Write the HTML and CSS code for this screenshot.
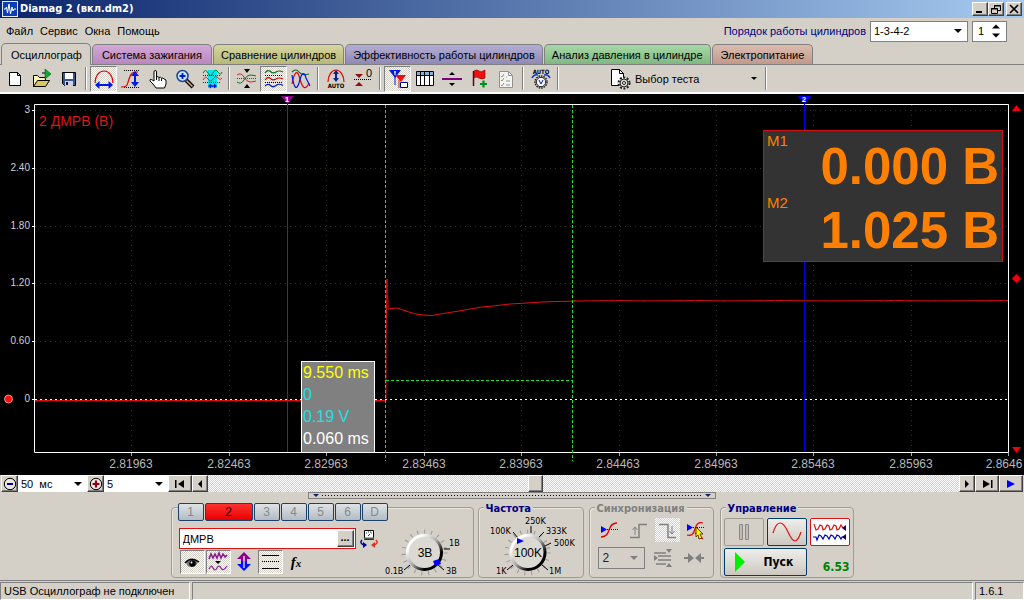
FILE: index.html
```
<!DOCTYPE html>
<html lang="ru">
<head>
<meta charset="utf-8">
<meta name="viewport" content="width=device-width, initial-scale=1">
<title>Diamag 2</title>
<link rel="stylesheet" href="styles.css">
</head>
<body>
<div class="app">
  <header class="titlebar">
    <svg class="logo" width="16" height="16" viewBox="0 0 16 16"><rect x=".5" y=".5" width="15" height="15" fill="#0c3fb4" stroke="#dfe9ff"/><path d="M2 8h1.500l1-2 1 6 1.500-9 1.500 10 1.500-7 1 4 1-2h2" fill="none" stroke="#fff"/></svg>
    <h1 class="title">Diamag 2 (вкл.dm2)</h1>
    <div class="winbuttons">
      <button class="winbtn" aria-label="Свернуть"><svg width="12" height="10"><path d="M2 8h6" stroke="#000" stroke-width="2"/></svg></button>
      <button class="winbtn" aria-label="Восстановить"><svg width="12" height="10" fill="none" stroke="#000"><path d="M4.500 4V1.500h6v5H8M4 2h7M1.500 4.500h6v5h-6zM1 5h7"/></svg></button>
      <button class="winbtn winbtn-close" aria-label="Закрыть"><svg width="12" height="10"><path d="M2 1l8 8M10 1L2 9" stroke="#000" stroke-width="1.600"/></svg></button>
    </div>
  </header>

  <div class="menurow">
    <nav class="menu">
      <button>Файл</button><button>Сервис</button><button>Окна</button><button>Помощь</button>
    </nav>
    <div class="order">
      <label for="order">Порядок работы цилиндров</label>
      <span class="combo combo-order"><select id="order"><option>1-3-4-2</option></select></span>
      <span class="spin"><input type="text" value="1" aria-label="Цилиндр"><svg width="10" height="14" viewBox="0 0 10 14"><path d="M1 4.500L5 .5l4 4zM1 9.500l4 4 4-4z"/></svg></span>
    </div>
  </div>

  <nav class="tabs">
    <button class="tab tab-active">Осциллограф</button>
    <button class="tab tab-ignition">Система зажигания</button>
    <button class="tab tab-compare">Сравнение цилиндров</button>
    <button class="tab tab-power">Эффективность работы цилиндров</button>
    <button class="tab tab-pressure">Анализ давления в цилиндре</button>
    <button class="tab tab-supply">Электропитание</button>
  </nav>

  <div class="toolbar">
    <button class="tool" aria-label="Новый"><svg viewBox="0 0 22 22"><path d="M5.500 4.500h8l3 3v10h-11z" fill="#fff" stroke="#000"/><path d="M13.500 4.500v3h3" fill="none" stroke="#000"/></svg></button>
    <button class="tool" aria-label="Открыть"><svg viewBox="0 0 22 22"><path d="M2.500 18.500v-11h4l2 2h6v3" fill="#fff8b0" stroke="#000"/><path d="M2.500 18.500l4-6h12l-4 6z" fill="#d8c860" stroke="#000"/><path d="M11 5h3" stroke="#000"/><path d="M14 1l6 5-6 5z" fill="#00b030" stroke="#005010" stroke-width=".6"/></svg></button>
    <button class="tool" aria-label="Сохранить"><svg viewBox="0 0 22 22"><path d="M4.500 4.500h13v13h-11l-2-2z" fill="#40508c" stroke="#000"/><path d="M7 5h8v6H7z" fill="#fff"/><path d="M7 13h8v5H7z" fill="#d0d0d8"/><path d="M8 14h2v3H8z" fill="#101030"/></svg></button>
    <span class="sep"></span>
    <button class="tool tool-on" aria-label="По горизонтали"><svg viewBox="0 0 22 22"><path d="M2 15C2 8 6 3 11 3s9 5 9 12" fill="none" stroke="#e00000" stroke-width="1.200"/><path d="M2 17l4.500-4v3h9v-3l4.500 4-4.500 4v-3h-9v3z" fill="#0018e8"/></svg></button>
    <button class="tool" aria-label="По вертикали"><svg viewBox="0 0 22 22"><path d="M1 19c7 0 6-2 8-8s3-7 9-7" fill="none" stroke="#e00000" stroke-width="1.200"/><path d="M4 2.500h16M4 19.500h16" stroke="#000" stroke-dasharray="1 1"/><path d="M15 3l4 5h-3v6h3l-4 5-4-5h3V8h-3z" fill="#0018e8"/></svg></button>
    <button class="tool" aria-label="Рука"><svg viewBox="0 0 22 22"><path d="M7 13V4q0-1.500 1.300-1.500T9.500 4v5q1.500-1 2.500.500 1.600-.8 2.500.700 1.800-.7 2.500.800 2 0 2 2v3l-1.500 4H9l-3-4-3-3q-.5-2 1.500-1.500z" fill="#fff" stroke="#000"/><path d="M9.500 9v3M12 10v3M14.500 10.500V13" stroke="#000"/></svg></button>
    <button class="tool" aria-label="Масштаб"><svg viewBox="0 0 22 22"><path d="M12 12l7 7" stroke="#000" stroke-width="4"/><path d="M12.500 12.500l6 6" stroke="#d8b060" stroke-width="1.500"/><circle cx="8.500" cy="8" r="5.500" fill="#c4e8ff" stroke="#20408c" stroke-width="1.500"/><path d="M5.500 8h6M8.500 5v6" stroke="#0018c8" stroke-width="1.800"/></svg></button>
    <button class="tool" aria-label="Участок"><svg viewBox="0 0 22 22"><path d="M7 2h9v18H7z" fill="#00e8f0"/><path d="M2 5q2.500-5 5 0t5 0 5-1 4 0" fill="none" stroke="#007828"/><path d="M2 12q2.500-5 5-1t5 0 5-1 4 0" fill="none" stroke="#e02020"/><path d="M2 7.500h18M2 14.500h18" stroke="#223" stroke-dasharray="1 1"/><path d="M8 18h7" stroke="#0018c8" stroke-width="1.500"/><path d="M7 18l3-2.500v5zM16 18l-3-2.500v5z" fill="#0018c8"/></svg></button>
    <span class="sep"></span>
    <button class="tool" aria-label="Сжать"><svg viewBox="0 0 22 22"><path d="M8 1h6l-3 4zM8 20h6l-3-4z"/><path d="M1 7q4-3 7 2t6 5 6-1" fill="none" stroke="#e02020"/><path d="M1 14q4 3 7-2t6-5 6 1" fill="none" stroke="#007828"/><path d="M1 10.500h20" stroke="#444" stroke-dasharray="1 1"/></svg></button>
    <button class="tool tool-on" aria-label="Раздельно"><svg viewBox="0 0 22 22" fill="none"><path d="M2 5q3-4 5.500-1.500T13 4t7 0" stroke="#007828" stroke-width="1.200"/><path d="M2 12q3-4 5.500-1.500T13 11t7 0" stroke="#e00000" stroke-width="1.200"/><path d="M2 18q3-3 5.500-.5t5.500 0 7 0" stroke="#0018c8" stroke-width="1.200"/><path d="M2 7.500h18M2 14.500h18" stroke="#000" stroke-dasharray="1 1"/></svg></button>
    <button class="tool" aria-label="Наложить"><svg viewBox="0 0 22 22" fill="none"><path d="M2 4q4-4 7 0t10 2" stroke="#007828" stroke-width="1.200"/><path d="M2 16Q6-4 10 11t9 4" stroke="#e00000" stroke-width="1.200"/><path d="M2 7q3 20 7 8 4-16 7-5l4 8" stroke="#0018e8" stroke-width="1.200"/></svg></button>
    <span class="sep"></span>
    <button class="tool" aria-label="Авто"><svg viewBox="0 0 22 22"><path d="M3 14C3 7 7 2 11 2s8 5 8 12" fill="none" stroke="#e00000" stroke-width="1.200"/><path d="M11 2l3 4h-2v4h2l-3 4-3-4h2V6H8z" fill="#102080"/><text x="11" y="20" class="icon-text">AUTO</text></svg></button>
    <button class="tool" aria-label="Ноль"><svg viewBox="0 0 22 22"><path d="M3 6h8l-4 4zM3 18h8l-4-4z" fill="#901010"/><path d="M2 11.500h18" stroke="#000" stroke-dasharray="1 1"/><text x="17" y="9" class="icon-zero">0</text></svg></button>
    <span class="sep"></span>
    <button class="tool tool-on" aria-label="Маркеры"><svg viewBox="0 0 22 22"><path d="M2 2h12L8 10z" fill="#0018e8"/><path d="M8 8v9" stroke="#0018e8"/><path d="M8 7h11l-5 7z" fill="#e81010"/><path d="M12 12v8" stroke="#e81010"/><path d="M7 4h2M8 3v4" stroke="#fff"/><path d="M13.500 14.500h7v5h-7z" fill="#fff" stroke="#000080"/></svg></button>
    <button class="tool" aria-label="Таблица"><svg viewBox="0 0 22 22"><path d="M2.500 3.500h17v14h-17z" fill="#fff" stroke="#000"/><path d="M3 4h16v3H3z" fill="#88b0d8"/><path d="M2 7.500h18M6.500 4v13M10.500 4v13M15.500 4v13" stroke="#000"/></svg></button>
    <button class="tool" aria-label="Линия"><svg viewBox="0 0 22 22"><path d="M1 11h20" stroke="#800080" stroke-width="2"/><path d="M8 7l3-3 3 3zM8 15h6l-3 3z"/></svg></button>
    <button class="tool" aria-label="Флажок"><svg viewBox="0 0 22 22"><path d="M5.500 3v15" stroke="#5c0010" stroke-width="1.500"/><path d="M6 3q3-2 5 0t6-1v8q-3 2-6 0t-5 0z" fill="#f01010" stroke="#700000" stroke-width=".6"/><path d="M12 16h7M15.500 12.500v7" stroke="#009020" stroke-width="2.200"/></svg></button>
    <button class="tool" aria-label="Список"><svg viewBox="0 0 22 22"><path d="M4.500 3.500h9l4 4v12h-13z" fill="#f4f4f0" stroke="#909090"/><path d="M13.500 3.500v4h4" fill="none" stroke="#909090"/><path d="M6 8l1 1 2-3M6 12l1 1 2-3M6 17l1 1 2-3M11 9h1M11 13h4M11 17h4" fill="none" stroke="#909090"/></svg></button>
    <span class="sep"></span>
    <button class="tool" aria-label="Автоизмерение"><svg viewBox="0 0 22 22"><text x="11" y="6" class="icon-text">AUTO</text><path d="M2 10q2-4 6-3M20 10q-2-4-6-3" fill="none" stroke="#1838d0" stroke-width="1.500"/><circle cx="11" cy="14" r="6" fill="none" stroke="#222" stroke-width="1.500" stroke-dasharray="1.500 1"/><circle cx="11" cy="14" r="4.700" fill="#f0f4ff" stroke="#222"/><path d="M9 12l2 4 2-4" fill="none" stroke="#1020a0"/></svg></button>
    <span class="sep sep-wide"></span>
    <button class="testpick">
      <svg width="22" height="22" viewBox="0 0 22 22"><path d="M2.500 1.500h8l4 4v12h-12z" fill="#fff" stroke="#000"/><path d="M10.500 1.500v4h4" fill="none" stroke="#000"/><circle cx="15" cy="15" r="5.500" fill="#e8e8e0" stroke="#222" stroke-width="2" stroke-dasharray="2 1.500"/><circle cx="15" cy="15" r="4" fill="#d8d8d0" stroke="#222"/><circle cx="15" cy="15" r="1.500" fill="#fff" stroke="#222"/></svg>
      <span>Выбор теста</span><i class="caret"></i>
    </button>
    <span class="sep"></span>
  </div>

  <main class="scope">
    <svg class="plot" viewBox="0 94 1024 381">
      <g class="grid">
        <path d="M35 110.500H1008M35 168.500H1008M35 226.500H1008M35 283.500H1008M35 341.500H1008"/>
        <path d="M131.500 105V452M229.500 105V452M326.500 105V452M424.500 105V452M521.500 105V452M619.500 105V452M716.500 105V452M813.500 105V452M911.500 105V452"/>
      </g>
      <path class="frame" d="M34.500 104.500H1008.500V452.500H34.500z"/>
      <path class="ticks" d="M32 110.500h3M32 168.500h3M32 226.500h3M32 283.500h3M32 341.500h3M32 399.500h3"/>
      <path class="xticks" d="M131.500 453v3M229.500 453v3M326.500 453v3M424.500 453v3M521.500 453v3M619.500 453v3M716.500 453v3M813.500 453v3M911.500 453v3M1008.500 453v3"/>
      <g class="ylabels"><text x="30" y="113">3</text><text x="30" y="171">2.40</text><text x="30" y="229">1.80</text><text x="30" y="286">1.20</text><text x="30" y="344">0.60</text><text x="30" y="402">0</text></g>
      <g class="xlabels"><text x="131" y="468">2.81963</text><text x="229" y="468">2.82463</text><text x="326" y="468">2.82963</text><text x="424" y="468">2.83463</text><text x="521" y="468">2.83963</text><text x="618" y="468">2.84463</text><text x="716" y="468">2.84963</text><text x="813" y="468">2.85463</text><text x="911" y="468">2.85963</text><text x="1004" y="468">2.8646</text></g>
      <text class="channel-name" x="39" y="126">2 ДМРВ (В)</text>
      <path class="marker1" d="M287.500 104V452"/>
      <path d="M281 96h13l-6.500 8z" fill="#900090"/><text class="flag" x="287" y="102">1</text>
      <path class="marker2" d="M804.500 104V452"/>
      <path d="M798 96h13l-6.500 8z" fill="#0000ff"/><text class="flag" x="804" y="102">2</text>
      <path class="trace" d="M35 400.500H386V345L387 279V294L388 300V309L397 308L403 310L409 312L416 314L423 315L432 315.500L440 314L453 312L462 310.500L470 309L482 307L493 306L510 304L527 303L542 302L557 301.500L580 301L620 300.500L640 301L700 300.500L720 301L780 300.500L830 301L900 300.500L930 301L1008 300.500"/>
      <path class="noise" d="M573 300.500H1008M35 401.500H386"/>
      <path class="zero" d="M35 399.500H1008"/>
      <path class="cursor" d="M385.500 105V461M572.500 105V461M386 380.500H572"/>
      <circle cx="8.500" cy="399" r="4" fill="#ff1010" stroke="#ffb0a0" stroke-width=".8"/>
      <path d="M1012 111l4.500-6 4.500 6zM1012 447h9l-4.500 6zM1012 278.500l4.500-4.500 4.500 4.500-4.500 4.500z" fill="#f00010"/>
    </svg>
    <div class="cursorbox"><span class="c-time">9.550 ms</span><span class="c-val">0</span><span class="c-val">0.19 V</span><span>0.060 ms</span></div>
    <div class="meter">
      <div class="meter-row"><span class="meter-name">M1</span><strong>0.000 В</strong></div>
      <div class="meter-row"><span class="meter-name">M2</span><strong>1.025 В</strong></div>
    </div>
  </main>

  <div class="scrollrow">
    <button class="raised round" aria-label="Меньше"><svg width="14" height="14" viewBox="0 0 14 14"><circle cx="7" cy="7" r="5.700" fill="#ece9e2" stroke="#000"/><path d="M4 7h6" stroke="#0000a0" stroke-width="2"/></svg></button>
    <span class="combo combo-time"><select aria-label="Развёртка"><option>50&nbsp; мс</option></select></span>
    <button class="raised round" aria-label="Больше"><svg width="14" height="14" viewBox="0 0 14 14"><circle cx="7" cy="7" r="5.700" fill="#ece9e2" stroke="#000"/><path d="M3.500 7h7M7 3.500v7" stroke="#900010" stroke-width="2.200"/></svg></button>
    <span class="combo combo-zoom"><select aria-label="Масштаб"><option>5</option></select></span>
    <button class="raised wide" aria-label="В начало"><svg width="12" height="8" viewBox="0 0 12 8"><path d="M1 0h1.500v8H1zM10 0v8L4 4z"/></svg></button>
    <button class="raised" aria-label="Влево"><svg width="6" height="8" viewBox="0 0 6 8"><path d="M5 0v8L1 4z"/></svg></button>
    <div class="track"><span class="thumb"></span></div>
    <button class="raised" aria-label="Вправо"><svg width="6" height="8" viewBox="0 0 6 8"><path d="M1 0v8l4-4z"/></svg></button>
    <button class="raised wide" aria-label="В конец"><svg width="12" height="8" viewBox="0 0 12 8"><path d="M10 0h1.500v8H10zM2 0v8l7-4z"/></svg></button>
    <button class="raised wide" aria-label="Воспроизвести"><svg width="12" height="8" viewBox="0 0 12 8"><path d="M2 0v8l8-4z" fill="#0000ff"/></svg></button>
  </div>

  <div class="splitter"><span class="grip"></span></div>

  <section class="panels">
    <div class="group channel">
      <div class="channel-left">
        <div class="chbuttons">
          <button class="ch">1</button><button class="ch ch-on">2</button><button class="ch">3</button><button class="ch">4</button><button class="ch">5</button><button class="ch">6</button><button class="ch">D</button>
        </div>
        <div class="probe">
          <span class="probe-field"><input type="text" value="ДМРВ" aria-label="Датчик"><button class="raised dots" aria-label="Выбрать">...</button></span>
          <button class="plain" aria-label="Подключить"><svg width="20" height="20" viewBox="0 0 20 20"><path d="M5.500 1.500h9v9h-9z" fill="#fff" stroke="#000"/><path d="M5 8.500h10v2H5z" fill="#506050"/><path d="M7 4h1M9 3h1M11 3h1M13 4h-1M11 5l-2 2" stroke="#333"/><path d="M3 11q-3 3 2 5" fill="none" stroke="#000090" stroke-width="1.500"/><path d="M4 13l4 3-4 3z" fill="#000090"/><path d="M17 11q3 3-2 5" fill="none" stroke="#e03020" stroke-width="1.500"/><path d="M16 13l-4 3 4 3z" fill="#e03020"/></svg></button>
        </div>
        <div class="chtools">
          <button class="sq sq-on" aria-label="Видимость"><svg viewBox="0 0 22 22"><path d="M5 11q6-5 12 0-2 5-7 5-4 0-5-5z" fill="#777"/><path d="M4 12q6-7 14-1" fill="none" stroke="#000" stroke-width="1.500"/><circle cx="11.500" cy="12.500" r="3.200"/><circle cx="10.500" cy="11.500" r="1" fill="#fff"/></svg></button>
          <button class="sq sq-on" aria-label="Фильтр"><svg viewBox="0 0 22 22" fill="none" stroke="#901890"><path d="M2 8l2-5 2 4 2-4 2 4 2-5 2 5 2-4 2 3 2-2" stroke-width="1.600"/><path d="M2 18q2-5 4-1t4 0 4 0 6-2" stroke-width="1.200"/><path d="M8 10h6l-3 3z" fill="#000" stroke="none"/></svg></button>
          <button class="sq" aria-label="Инверсия"><svg viewBox="0 0 22 22"><path d="M11 1l7 7h-4v3H8V8H4z" fill="#900090"/><path d="M11 20l7-7h-4v-3H8v3H4z" fill="#0010ff"/><path d="M11 5v12" stroke="#fff" stroke-width="1.200"/></svg></button>
          <button class="sq sq-on" aria-label="Связь"><svg viewBox="0 0 22 22"><path d="M3 4.500h17M3 17.500h17" stroke="#000"/><path d="M3 10.500h17" stroke="#000" stroke-dasharray="1 1"/></svg></button>
          <button class="sq fx" aria-label="Функция"><i>f<small>x</small></i></button>
        </div>
      </div>
      <svg class="knob" width="90" height="74" viewBox="382 504 90 74">
        <defs><linearGradient id="k" x1="0" y1="0" x2="1" y2="1"><stop offset=".2" stop-color="#fff"/><stop offset=".5" stop-color="#aaa"/><stop offset=".75" stop-color="#000"/></linearGradient></defs>
        <circle cx="424.500" cy="552.500" r="21" class="dial"/>
        <path d="M410 565l-6 5M438 565l6 5M444 549h6" stroke="#000"/>
        <circle cx="424.500" cy="552.500" r="17" fill="#dcd9d3" stroke="url(#k)" stroke-width="3"/>
        <path d="M433 561l6-2 2 5-6 2z" fill="#0000ff"/>
        <text class="knob-val" x="425" y="557">3В</text>
        <text x="385" y="574">0.1В</text><text x="449" y="546">1В</text><text x="446" y="574">3В</text>
      </svg>
    </div>

    <div class="group freq">
      <h2>Частота</h2>
      <svg class="knob" width="102" height="66" viewBox="481 512 102 66">
        <circle cx="528.500" cy="552.500" r="21" class="dial"/>
        <path d="M514 565l-6 5M543 565l6 5M514 532l5 6M532 526v7M545 532l-5 5M552 543l-6 3" stroke="#000"/>
        <circle cx="529" cy="552.500" r="17" fill="#dcd9d3" stroke="url(#k)" stroke-width="3"/>
        <path d="M518 538v6l7-3z" fill="#0000ff"/>
        <text class="knob-val" x="529" y="557">100K</text>
        <text x="497" y="574">1K</text><text x="491" y="534">100K</text><text x="526" y="524">250K</text><text x="547" y="534">333K</text><text x="555" y="546">500K</text><text x="550" y="574">1M</text>
      </svg>
    </div>

    <div class="group sync">
      <h2>Синхронизация</h2>
      <div class="sync-row">
        <button class="sq" aria-label="Уровень"><svg viewBox="0 0 22 22"><path d="M2 18q6 0 8-7t8-7" fill="none" stroke="#e00000" stroke-width="1.300"/><path d="M8 10.500h12" stroke="#0000ff" stroke-dasharray="1 1"/><path d="M2 7v7l6-3.500z" fill="#0000ff"/></svg></button>
        <button class="sq" aria-label="Фронт"><svg viewBox="0 0 22 22" fill="none" stroke="#808080"><path d="M2 18.500h9v-13h8" stroke-width="1.500"/><path d="M7 16V9M4.500 11L7 8l2.500 3"/></svg></button>
        <button class="sq hatch" aria-label="Спад"><svg viewBox="0 0 22 22" fill="none" stroke="#808080"><path d="M3 5.500h9v13h8" stroke-width="1.500"/><path d="M16 7v8M13.500 12l2.500 3 2.500-3"/></svg></button>
        <button class="sq" aria-label="Выбор уровня"><svg viewBox="0 0 22 22"><path d="M2 16q6 2 8-6t8-6M10 14l8 6" fill="none" stroke="#e00000" stroke-width="1.300"/><path d="M8 8.500h12" stroke="#0000ff" stroke-dasharray="1 1"/><path d="M2 5v7l6-3.500z" fill="#0000ff"/><path d="M11 8l7 7h-3l2 4-3 1-1-4-2 2z" fill="#fff000" stroke="#604000"/></svg></button>
      </div>
      <div class="sync-row">
        <span class="combo combo-sync"><select aria-label="Канал синхронизации" disabled><option>2</option></select></span>
        <button class="sq" aria-label="Границы"><svg viewBox="0 0 22 22"><path d="M2 6h12M6 9h13M6 13h13M4 17h10" stroke="#808080" stroke-width="1.500"/><path d="M2 8l4 3-4 3zM14 2h6l-3 4zM14 20h6l-3-4z" fill="#808080"/></svg></button>
        <button class="sq" aria-label="Сжать"><svg viewBox="0 0 22 22"><path d="M1 11h8M13 11h8" stroke="#808080" stroke-width="2"/><path d="M5 6l6 5-6 5zM18 6l-6 5 6 5z" fill="#808080"/></svg></button>
      </div>
    </div>

    <div class="group control">
      <h2>Управление</h2>
      <div class="control-grid">
        <button class="big big-off" aria-label="Пауза"><svg width="12" height="16"><path d="M1.500.5h3v15h-3zM7.500.5h3v15h-3z" fill="#c0bcb4" stroke="#888"/></svg></button>
        <button class="big" aria-label="Однократно"><svg width="30" height="20" viewBox="0 0 30 20"><path d="M1 11Q4 1 8 1t8 9 7 9 6-9" fill="none" stroke="#e01010" stroke-width="1.200"/></svg></button>
        <button class="big big-red" aria-label="Непрерывно"><svg width="34" height="20" viewBox="0 0 34 20" fill="none"><path d="M1 2l2 6 2-1 2-4 2 1 1 4 2-1 2-4 2 1 1 4 2-1 2-4 2 1 1 4 2-1 2-4 2 3" stroke="#e01010" stroke-width="1.200"/><path d="M0 15h3l1 3 2-5 2 1 2 3 2-4 2 1 2 3 2-4 2 1 2 3 2-4 2 1 2 3 1-2h3" stroke="#0000c0" stroke-width="1.200"/><path d="M33 3v6l-4-3zM33 12v6l-4-3z" fill="#100060"/></svg></button>
        <button class="big start"><svg width="12" height="20"><path d="M1 0l10 10L1 20z" fill="#00f000"/></svg><span>Пуск</span></button>
        <output class="rate">6.53</output>
      </div>
    </div>
  </section>

  <footer class="status">
    <span class="status-main">USB Осциллограф не подключен</span><span class="status-mid"></span><span class="status-ver">1.6.1</span>
  </footer>
</div>
</body>
</html>
```
FILE: styles.css
```
* { box-sizing: border-box; }
body {
  margin: 0;
  background: #d4d0c8;
  color: #000;
  font: 11px/16px "Liberation Sans", Arial, sans-serif;
}
button, select, input { font: inherit; color: inherit; margin: 0; padding: 0; border-radius: 0; }
button { border: 0; background: none; }
svg { display: block; flex: none; }
.app { min-height: 100vh; display: flex; flex-direction: column; overflow: hidden; }

.titlebar {
  height: 18px; display: flex; align-items: center; gap: 2px; padding: 0 2px;
  background: linear-gradient(90deg, #0a246a, #a6caf0);
}
.title { margin: 0; flex: 1; color: #fff; font: bold 11px/16px "DejaVu Sans Condensed", "DejaVu Sans", sans-serif; }
.winbuttons { display: flex; }
.winbtn, .raised {
  display: flex; align-items: center; justify-content: center;
  background: #d4d0c8; border: 1px solid; border-color: #fff #404040 #404040 #fff;
  box-shadow: inset -1px -1px #808080;
}
.winbtn { width: 16px; height: 14px; }
.winbtn-close { margin-left: 2px; }

.menurow { height: 26px; display: flex; justify-content: space-between; align-items: center; padding: 0 17px 0 6px; }
.menu { display: flex; gap: 7px; }
.order { display: flex; align-items: center; gap: 4px; color: #000080; }
.combo { position: relative; display: flex; color: #000; background: #fff; }
.combo select { appearance: none; width: 100%; border: 0; background: transparent; color: inherit; padding: 0 3px; opacity: 1; }
.combo::after, .caret { content: ""; border: 4px solid transparent; border-top-color: currentColor; border-bottom: 0; }
.combo::after { position: absolute; right: 5px; top: 50%; margin-top: -2px; pointer-events: none; }
.combo-order { width: 98px; height: 21px; border: 1px solid #808080; }
.spin { width: 35px; height: 21px; display: flex; align-items: center; background: #fff; border: 1px solid #808080; color: #000; padding-right: 5px; }
.spin input { flex: 1; min-width: 0; border: 0; background: none; padding-left: 5px; }

.tabs { display: flex; align-items: flex-end; height: 21px; border-bottom: 1px solid #808080; padding-left: 1px; gap: 1px; }
.tab { height: 20px; padding: 0 7px; border: 1px solid #808080; border-bottom: 0; border-radius: 5px 5px 0 0; white-space: nowrap; }
.tab-active { height: 22px; margin-bottom: -1px; padding: 0 8px 0 9px; background: #d4d0c8; }
.tab-ignition { background: linear-gradient(#d3a8d6, #b888bd); padding: 0 9px; }
.tab-compare { background: linear-gradient(#d5d5a0, #b8b878); }
.tab-power { background: linear-gradient(#b4aed4, #9089b4); }
.tab-pressure { background: linear-gradient(#a8d8a8, #80b880); }
.tab-supply { background: linear-gradient(#dcbcb0, #c09a8c); padding: 0 8px; }

.toolbar { display: flex; align-items: center; height: 29px; padding-left: 1px; border-bottom: 2px solid #fff; }
.tool { width: 27px; height: 26px; display: flex; align-items: center; justify-content: center; border: 1px solid transparent; }
.tool svg { width: 22px; height: 22px; }
.tool-on, .sq-on, .hatch, .track {
  background: conic-gradient(#fff 25%, #d4d0c8 0 50%, #fff 0 75%, #d4d0c8 0) 0 0 / 2px 2px;
}
.tool-on, .sq-on { border: 1px solid; border-color: #808080 #fff #fff #808080; }
.sep { width: 8px; height: 23px; display: flex; justify-content: center; }
.sep::before { content: ""; width: 2px; box-sizing: border-box; background: #808080; border-right: 1px solid #fff; }
.sep-wide { margin-right: 47px; }
.icon-text { font: bold 6px "DejaVu Sans Condensed", sans-serif; text-anchor: middle; }
.icon-zero { font: 11px "Liberation Sans", sans-serif; text-anchor: middle; }
.testpick { width: 153px; height: 24px; display: flex; align-items: center; gap: 4px; text-align: left; padding-right: 5px; }
.testpick span { flex: 1; }
.caret { border-width: 3px 3px 0; }

.scope { position: relative; background: #000; }
.plot { width: 100%; height: auto; font-family: "Liberation Sans", sans-serif; }
.grid, .frame, .ticks, .xticks, .trace, .noise, .zero, .cursor { fill: none; }
.grid { stroke: #303026; stroke-dasharray: 1 4; }
.frame, .ticks { stroke: #fff; }
.xticks { stroke: #aaa; }
.ylabels { font-size: 10px; fill: #d0d0d0; text-anchor: end; }
.xlabels { font-size: 12px; fill: #b8b8b8; text-anchor: middle; }
.channel-name { font-size: 14px; fill: #d81818; }
.marker1 { stroke: #900090; }
.marker2 { stroke: #0000e0; }
.flag { font-size: 8px; font-weight: bold; fill: #fff; text-anchor: middle; }
.trace { stroke: #e01010; }
.noise { stroke: #a00808; stroke-dasharray: 3 2 1 4; }
.zero { stroke: #fff; stroke-dasharray: 2 3; }
.cursor { stroke: #20e020; stroke-dasharray: 3 2; }
.cursorbox {
  position: absolute; left: 301px; bottom: 22px; width: 74px; height: 92px;
  display: flex; flex-direction: column; background: #808080; border: 1px solid #fff;
  color: #fff; font-size: 16px; line-height: 22px; padding-left: 1px; white-space: nowrap;
}
.c-time { color: #ff0; }
.c-val { color: #20e0e0; }
.meter { position: absolute; right: 21px; top: 36px; width: 240px; background: #333; border: 1px solid #d01010; color: #ff8000; padding-bottom: 2px; }
.meter-row { display: flex; justify-content: space-between; height: 64px; padding: 0 3px; }
.meter-name { font-size: 15px; line-height: 20px; }
.meter-row + .meter-row .meter-name { line-height: 16px; }
.meter strong { font-size: 51px; line-height: 72px; }

.scrollrow { display: flex; height: 17px; padding: 0 1px; }
.raised { width: 16px; }
.round { width: 17px; }
.wide { width: 24px; }
.combo-time { width: 69px; }
.combo-zoom { width: 64px; }
.track { flex: 1; display: flex; justify-content: center; }
.thumb { width: 15px; margin-right: 97px; background: #d4d0c8; border: 1px solid; border-color: #fff #404040 #404040 #fff; box-shadow: inset -1px -1px #808080; }

.splitter { height: 7px; display: flex; justify-content: center; }
.grip {
  width: 408px; display: flex; align-items: center; justify-content: space-between; padding: 0 4px;
  border: 1px solid #808080;
  background: repeating-linear-gradient(90deg, #000 0 1px, transparent 1px 3px) center / 380px 1px no-repeat;
}
.grip::before, .grip::after { content: ""; border: 3px solid transparent; border-top-color: #102060; border-bottom: 0; }

.panels { flex: 1; display: flex; justify-content: center; gap: 4px; padding: 8px 0 2px; }
.group { border: 1px solid #a09c94; border-radius: 4px; box-shadow: inset 1px 1px #e8e5df; height: 71px; }
.group h2 { margin: -6px 0 0 5px; width: max-content; padding: 0 2px; background: #d4d0c8; font: bold 11px/14px "DejaVu Sans Condensed", "DejaVu Sans", sans-serif; color: #000080; }
.channel { width: 303px; display: flex; }
.channel-left { display: flex; flex-direction: column; width: 210px; padding-left: 6px; }
.chbuttons { display: flex; gap: 1px; margin-top: -5px; background: #d4d0c8; width: max-content; }
.ch { width: 26px; height: 18px; border: 1px solid #1c4068; border-radius: 2px; background: linear-gradient(#dfe3e6, #b2bcc4); color: #888; font-size: 12px; line-height: 14px; }
.ch-on { width: 48px; background: linear-gradient(#ff3030, #e80000); color: #000; }
.probe { display: flex; align-items: center; gap: 3px; margin-top: 7px; }
.probe-field { display: flex; width: 177px; height: 21px; background: #fff; border: 1px solid #e01010; padding: 1px; margin-left: 1px; }
.probe-field input { flex: 1; min-width: 0; border: 0; padding: 0 2px; background: none; }
.dots { width: 17px; font-weight: bold; line-height: 8px; padding-bottom: 4px; }
.plain { flex: none; }
.chtools { display: flex; gap: 1px; margin: 1px 0 0 2px; }
.sq { width: 25px; height: 24px; display: flex; align-items: center; justify-content: center; }
.sq svg { width: 22px; height: 22px; }
.fx { font: bold 15px/20px "Liberation Serif", serif; }
.fx small { font-size: 11px; }
.knob { font: 9px "DejaVu Sans Condensed", sans-serif; overflow: visible; }
.channel .knob { margin-top: -4px; }
.freq .knob { margin: -4px 0 0 1px; }
.knob-val { font: 12px "Liberation Sans", sans-serif; text-anchor: middle; }
.dial { fill: none; stroke: #999; stroke-width: 4; stroke-dasharray: 1 6; }
.freq { width: 106px; }
.sync { width: 125px; margin-left: 1px; }
.sync h2 { color: #808080; }
.sync-row { display: flex; align-items: center; justify-content: space-between; padding: 0 4px 0 8px; height: 28px; }
.sync-row + .sync-row { padding-right: 6px; }
.combo-sync { width: 47px; height: 22px; background: #d4d0c8; border: 1px solid #808080; }
.combo-sync::after { color: #808080; right: 6px; }
.combo-sync select { padding-left: 4px; color: #222; font-size: 12px; }
.control { width: 134px; margin-left: 2px; }
.control-grid { display: grid; grid-template-columns: repeat(3, 40px); gap: 2px 3px; padding: 2px 3px; }
.big { height: 28px; display: flex; align-items: center; justify-content: center; border: 1px solid #003c74; border-radius: 2px; background: linear-gradient(#f0eeea, #ccc8c0); }
.big-off { border-color: #a09c94; background: #d4d0c8; }
.big-red { border-color: #e01010; background: #fff; }
.start { grid-column: span 2; justify-content: flex-start; gap: 18px; padding-left: 9px; font: bold 12px "DejaVu Sans Condensed", sans-serif; }
.rate { align-self: end; text-align: right; color: #008000; font: bold 12px/18px "DejaVu Sans Condensed", sans-serif; }

.status { display: flex; gap: 2px; height: 20px; border-top: 1px solid #808080; padding-top: 1px; }
.status span { border: 1px solid; border-color: #808080 #fff #fff #808080; padding-left: 3px; line-height: 16px; }
.status-main { width: 190px; white-space: nowrap; }
.status-mid { flex: 1; }
.status-ver { width: 49px; }
```
